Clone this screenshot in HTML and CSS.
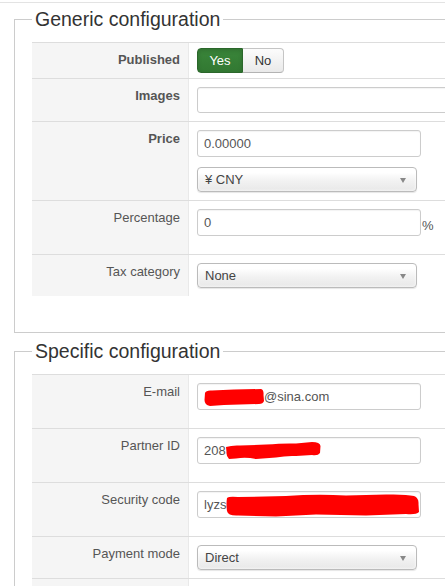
FILE: index.html
```html
<!DOCTYPE html>
<html>
<head>
<meta charset="utf-8">
<link rel="stylesheet" href="styles.css">
</head>
<body>
<div class="page">
  <fieldset class="adminform">
    <legend>Generic configuration</legend>
    <div class="rows">
      <div class="row">
        <div class="lbl strong tight">Published</div>
        <div class="ctl tight">
          <div class="btn-group">
            <span class="btn yes">Yes</span>
            <span class="btn no">No</span>
          </div>
        </div>
      </div>
      <div class="row">
        <div class="lbl strong">Images</div>
        <div class="ctl"><div class="input wide short"></div></div>
      </div>
      <div class="row">
        <div class="lbl strong">Price</div>
        <div class="ctl">
          <div class="input spaced">0.00000</div>
          <div class="select">¥ CNY<span class="caret"></span></div>
        </div>
      </div>
      <div class="row">
        <div class="lbl">Percentage</div>
        <div class="ctl with-addon">
          <div class="input spaced">0</div>
          <span class="addon">%</span>
        </div>
      </div>
      <div class="row">
        <div class="lbl">Tax category</div>
        <div class="ctl"><div class="select">None<span class="caret"></span></div></div>
      </div>
    </div>
  </fieldset>

  <fieldset class="adminform second">
    <legend>Specific configuration</legend>
    <div class="rows">
      <div class="row">
        <div class="lbl">E-mail</div>
        <div class="ctl">
          <div class="input spaced">
            <svg class="redact r-email" width="60" height="17" viewBox="0 0 60 17"><path d="M1 4 Q2 1 8 1.5 L30 0.5 L57 0 Q60 1 59.5 6 L60 12 Q59 15 55 15 L36 15.5 L20 16 L6 17 Q0.5 16 0.5 11 Z" fill="#ff0000"/></svg><span>@sina.com</span>
          </div>
        </div>
      </div>
      <div class="row">
        <div class="lbl">Partner ID</div>
        <div class="ctl">
          <div class="input spaced">
            <span>208</span><svg class="redact r-partner" width="95" height="18" viewBox="0 0 95 18"><path d="M0 5 Q6 3 14 3.5 L40 2.5 Q58 1 70 1.5 L86 0 Q94 0 94.5 4 L94 11 Q92 14 86 13 L70 14 Q60 13.5 50 15.5 L30 17 Q20 15 10 16.5 L3 17 Q0 14 0.5 10 Z" fill="#ff0000"/></svg>
          </div>
        </div>
      </div>
      <div class="row">
        <div class="lbl">Security code</div>
        <div class="ctl">
          <div class="input spaced">
            <span>lyzs</span><svg class="redact r-security" width="193" height="23" viewBox="0 0 193 23"><path d="M1 4 Q3 2 12 3 L60 2 Q90 0 120 1.5 L160 0.5 Q180 0 188 2 Q193 4 192.5 10 L193 18 Q190 21 180 20 L140 21.5 L90 20.5 L50 22.5 L12 21.5 Q2 22 1 17 Q0 10 1 4 Z" fill="#ff0000"/></svg>
          </div>
        </div>
      </div>
      <div class="row">
        <div class="lbl">Payment mode</div>
        <div class="ctl"><div class="select">Direct<span class="caret"></span></div></div>
      </div>
      <div class="row">
        <div class="lbl empty"></div>
        <div class="ctl"><div class="select blank"><span class="caret"></span></div></div>
      </div>
    </div>
  </fieldset>
</div>
</body>
</html>
```

FILE: styles.css
```css
html, body {
  margin: 0;
  padding: 0;
  background: #fff;
  overflow: hidden;
}

body {
  font-family: "Liberation Sans", Arial, sans-serif;
  font-size: 13px;
  line-height: 18px;
  color: #333;
}

.page {
  margin-top: 2px;
  border-top: 1px solid #e3e3e3;
  width: 760px;
}

.adminform {
  margin: 0 0 0 14px;
  padding: 7px 0 36px 17px;
  border: 1px solid #ccc;
  width: 700px;
  min-width: 0;
}

.adminform.second {
  margin-top: 2px;
}

.adminform legend {
  margin: 0;
  padding: 0 3px;
  font-size: 19.5px;
  line-height: 32px;
  color: #333;
  font-weight: normal;
}

.rows {
  display: flex;
  flex-direction: column;
}

.row {
  display: flex;
  border-top: 1px solid #ddd;
}

.lbl {
  flex: 0 0 157px;
  box-sizing: border-box;
  background: #f5f5f5;
  border-right: 1px solid #e9e9e9;
  text-align: right;
  padding: 8px 8px 7px 0;
  color: #555;
}

.lbl.strong {
  font-weight: bold;
}

.lbl.tight {
  padding-top: 8px;
}

.lbl.empty {
  min-height: 42px;
}

.ctl {
  flex: 1;
  padding: 8px;
}

.ctl.tight {
  padding: 5px 8px;
}

.btn-group {
  display: flex;
}

.btn {
  display: flex;
  align-items: center;
  justify-content: center;
  box-sizing: border-box;
  height: 25px;
  font-size: 13px;
}

.btn.yes {
  width: 46px;
  color: #fff;
  background: linear-gradient(#3a863a, #327832);
  border: 1px solid #2b672b;
  border-radius: 4px 0 0 4px;
  box-shadow: inset 0 2px 4px rgba(0, 0, 0, 0.15);
}

.btn.no {
  width: 41px;
  color: #333;
  background: linear-gradient(#fcfcfc, #e9e9e9);
  border: 1px solid #c5c5c5;
  border-left: 0;
  border-bottom-color: #b3b3b3;
  border-radius: 0 4px 4px 0;
}

.input {
  box-sizing: border-box;
  width: 224px;
  height: 27px;
  border: 1px solid #ccc;
  border-radius: 3px;
  background: #fff;
  color: #555;
  padding: 0 6px;
  display: flex;
  align-items: center;
  box-shadow: inset 0 1px 1px rgba(0, 0, 0, 0.05);
  white-space: nowrap;
}

.input.wide {
  width: 400px;
}

.input.short {
  height: 26px;
}

.input.spaced {
  margin-bottom: 10px;
}

.select {
  position: relative;
  box-sizing: border-box;
  width: 220px;
  height: 25px;
  border: 1px solid #bbb;
  border-radius: 4px;
  background: linear-gradient(#ffffff 20%, #f2f2f2 55%, #e8e8e8 100%);
  box-shadow: inset 0 0 3px #fff, 0 1px 1px rgba(0, 0, 0, 0.1);
  color: #444;
  padding: 0 7px;
  display: flex;
  align-items: center;
  font-size: 13px;
}

.caret {
  position: absolute;
  right: 10px;
  top: 10px;
  width: 0;
  height: 0;
  border-left: 3.5px solid transparent;
  border-right: 3.5px solid transparent;
  border-top: 5px solid #888;
}

.with-addon {
  display: flex;
  align-items: flex-start;
}

.addon {
  margin-top: 8px;
  margin-left: 1px;
  color: #555;
}

.redact {
  display: block;
  flex-shrink: 0;
  overflow: visible;
}

.r-email {
  margin-top: 1px;
}

.r-partner {
  margin-top: 1px;
}

.r-security {
  margin-top: 2px;
  margin-right: -8px;
}
```
